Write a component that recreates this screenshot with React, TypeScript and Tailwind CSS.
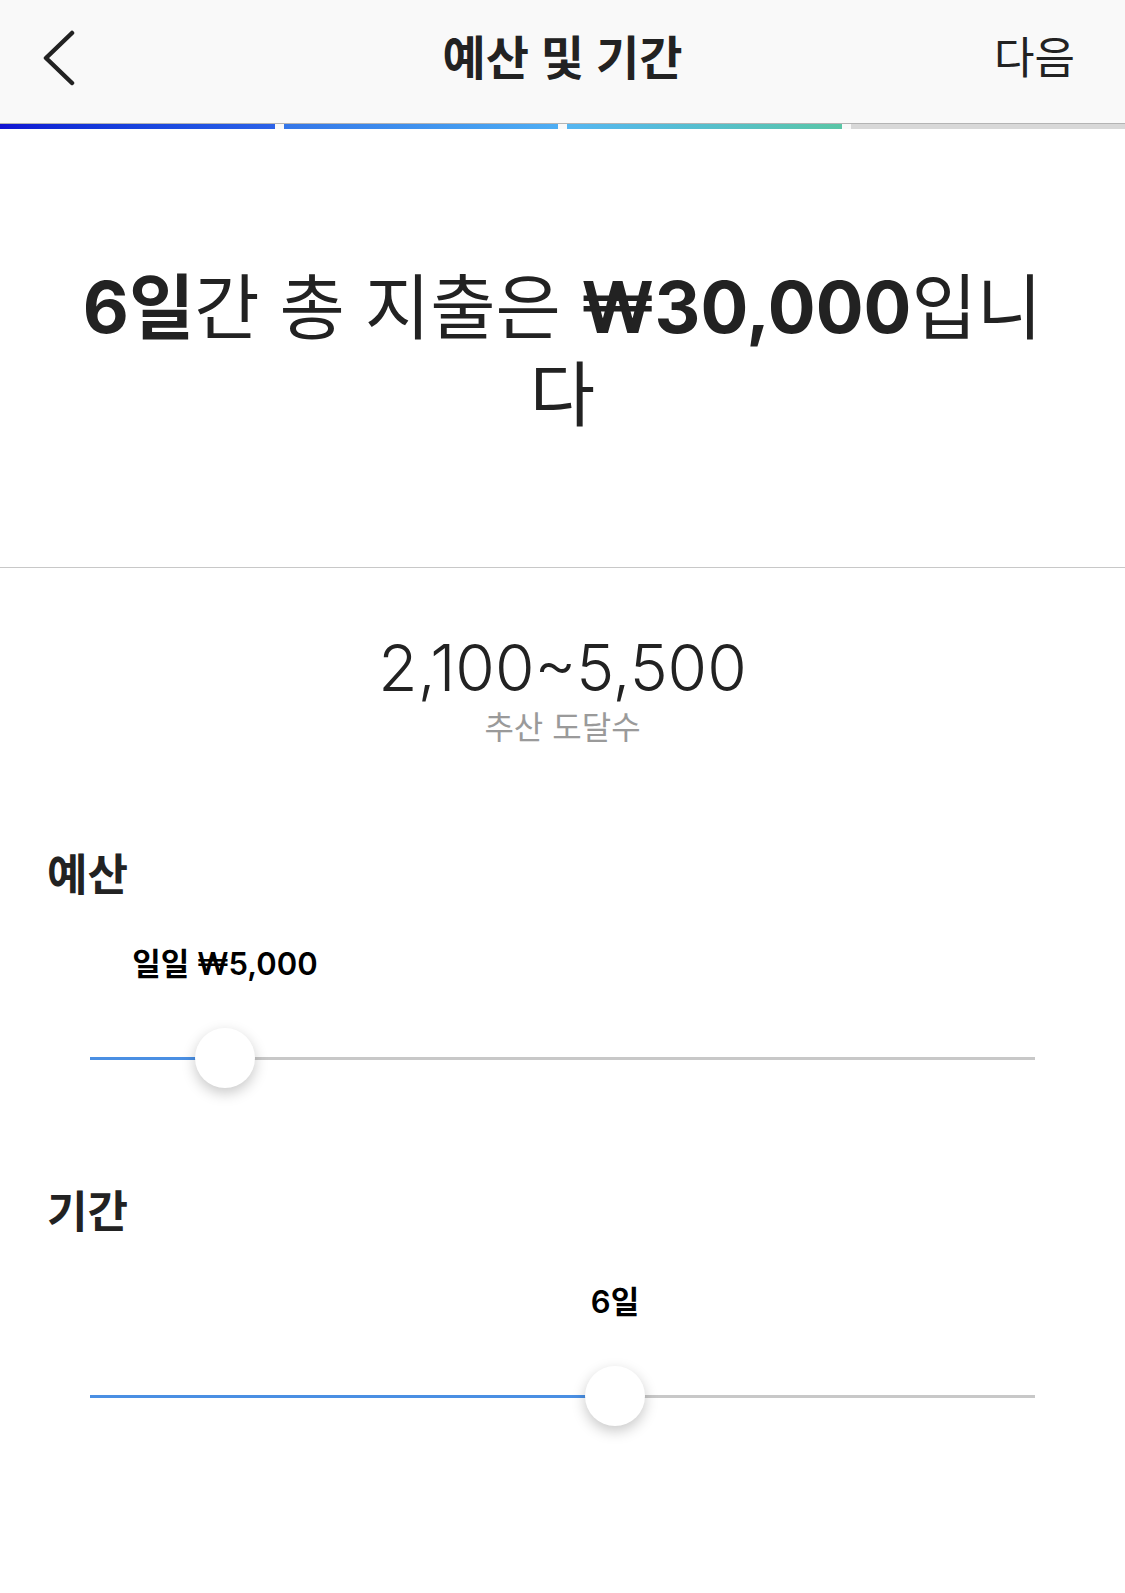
import React from "react";

const FONT = { fontFamily: 'Inter, "Noto Sans CJK KR", sans-serif' };

function Slider({ pct }: { pct: number }) {
  return (
    <div className="relative mx-[90px] h-[60px] flex items-center">
      <div className="w-full h-[3px] bg-[#c8c8c8] relative">
        <div className="h-full bg-[#4a8fe3]" style={{ width: `${pct}%` }} />
      </div>
      <div
        className="absolute top-0 w-[60px] h-[60px] -ml-[30px] rounded-full bg-white shadow-[0_5px_14px_rgba(0,0,0,0.22)]"
        style={{ left: `${pct}%` }}
      />
    </div>
  );
}

function ValueLabel({ pct, text }: { pct: number; text: string }) {
  return (
    <div className="relative mx-[90px] h-[40px]">
      <span
        className="absolute top-0 -translate-x-1/2 whitespace-nowrap text-[31px] leading-[40px] font-semibold text-black"
        style={{ left: `${pct}%` }}
      >
        {text}
      </span>
    </div>
  );
}

export default function App() {
  const p1 = (135 / 945) * 100;
  const p2 = (525 / 945) * 100;
  return (
    <div className="w-[1125px] min-h-[1593px] bg-white text-[#222]" style={FONT}>
      {/* Header */}
      <div className="h-[123px] bg-[#f9f9f9] grid grid-cols-[1fr_auto_1fr] items-center pb-[8px]">
        <div className="pl-[43px] flex items-center">
          <svg width="32" height="56" viewBox="0 0 32 56" fill="none">
            <path d="M29 3 L3 28 L29 53" stroke="#222" strokeWidth="4.5" strokeLinecap="round" strokeLinejoin="round" />
          </svg>
        </div>
        <div className="text-[47px] font-semibold leading-none">예산 및 기간</div>
        <div className="flex justify-end pr-[50px] text-[44px] leading-none">다음</div>
      </div>
      <div className="h-px bg-[#b4b4b4]" />
      <div className="h-[5px] flex gap-[9px] bg-[#f9f9f9]">
        <div className="flex-1 bg-gradient-to-r from-[#1212d2] to-[#2c62e8]" />
        <div className="flex-1 bg-gradient-to-r from-[#3576e8] to-[#4eaef4]" />
        <div className="flex-1 bg-gradient-to-r from-[#55b6f2] to-[#5ac6a6]" />
        <div className="flex-1 bg-[#d8d8d8]" />
      </div>

      {/* Headline */}
      <div className="h-[438px] flex items-center justify-center px-[60px] pt-[6px]">
        <h1 className="text-center text-[71px] leading-[87px] font-normal text-[#222]">
          <span className="font-bold">6일</span>간 총 지출은 <span className="font-bold">₩30,000</span>입니다
        </h1>
      </div>
      <div className="h-px bg-[#c8c8c8]" />

      {/* Reach */}
      <div className="pt-[60px] flex flex-col items-center">
        <div className="text-[64px] leading-[80px] font-light text-[#222]">2,100~5,500</div>
        <div className="text-[32px] leading-[40px] text-[#9a9a9a]">추산 도달수</div>
      </div>

      {/* Budget */}
      <div className="mt-[99px] px-[47px] text-[44px] leading-[56px] font-semibold text-[#222]">예산</div>
      <div className="mt-[41px]">
        <ValueLabel pct={p1} text="일일 ₩5,000" />
      </div>
      <div className="mt-[44px]">
        <Slider pct={p1} />
      </div>

      {/* Duration */}
      <div className="mt-[96px] px-[47px] text-[44px] leading-[56px] font-semibold text-[#222]">기간</div>
      <div className="mt-[42px]">
        <ValueLabel pct={p2} text="6일" />
      </div>
      <div className="mt-[44px]">
        <Slider pct={p2} />
      </div>
    </div>
  );
}
